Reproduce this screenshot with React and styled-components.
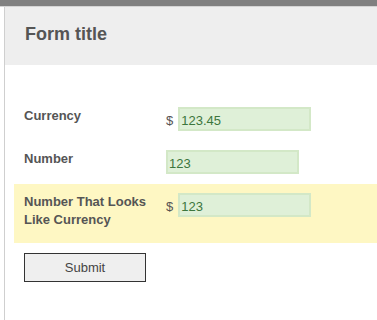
import React from "react";
import styled, { createGlobalStyle } from "styled-components";

const Global = createGlobalStyle`
  html, body { margin: 0; padding: 0; background: #fff; }
  body { font-family: "Liberation Sans", Arial, sans-serif; }
`;

const TopBar = styled.div`
  height: 6px;
  background: #808080;
  border-bottom: 1px solid #d4d4d4;
`;

const Panel = styled.div`
  margin-left: 4px;
  border-left: 1px solid #cfcfcf;
  min-height: 313px;
  box-sizing: border-box;
`;

const Header = styled.div`
  height: 58px;
  box-sizing: border-box;
  background: #eeeeee;
  padding: 16px 20px 0;
`;

const Title = styled.h1`
  margin: 0;
  font-size: 18px;
  line-height: 22px;
  font-weight: bold;
  color: #555;
`;

const Form = styled.form`
  padding: 33px 0 0 9px;
  display: flex;
  flex-direction: column;
`;

const Row = styled.div`
  display: flex;
  align-items: flex-start;
  padding: 9px 10px 10px;
  background: ${(p) => (p.$highlight ? "#fef7c3" : "transparent")};
`;

const Label = styled.label`
  width: 142px;
  flex: none;
  box-sizing: border-box;
  padding: 0 12px 4px 0;
  font-size: 13px;
  line-height: 18px;
  font-weight: bold;
  color: #555;
`;

const Control = styled.div`
  display: flex;
  align-items: center;
  gap: 5px;
  height: 24px;
`;

const Currency = styled.span`
  font-size: 13px;
  color: #555;
  padding-top: 2px;
`;

const Input = styled.input`
  width: 133px;
  height: 24px;
  box-sizing: border-box;
  border: 2px solid #d3e8c7;
  background: #dff0d8;
  color: #3c763d;
  font-family: "Liberation Sans", Arial, sans-serif;
  font-size: 13px;
  padding: 2px 1px 0;
  margin: 0;
  outline: none;
`;

const Button = styled.button`
  margin: 10px 0 0 10px;
  width: 122px;
  height: 29px;
  box-sizing: border-box;
  border: 1px solid #333;
  background: #efefef;
  color: #444;
  font-family: "Liberation Sans", Arial, sans-serif;
  font-size: 13px;
  padding: 0;
  align-self: flex-start;
`;

export default function App() {
  return (
    <>
      <Global />
      <TopBar />
      <Panel>
        <Header>
          <Title>Form title</Title>
        </Header>
        <Form onSubmit={(e) => e.preventDefault()}>
          <Row>
            <Label>Currency</Label>
            <Control>
              <Currency>$</Currency>
              <Input defaultValue="123.45" />
            </Control>
          </Row>
          <Row>
            <Label>Number</Label>
            <Control>
              <Input defaultValue="123" />
            </Control>
          </Row>
          <Row $highlight>
            <Label>Number That Looks Like Currency</Label>
            <Control>
              <Currency>$</Currency>
              <Input defaultValue="123" />
            </Control>
          </Row>
          <Button type="submit">Submit</Button>
        </Form>
      </Panel>
    </>
  );
}
